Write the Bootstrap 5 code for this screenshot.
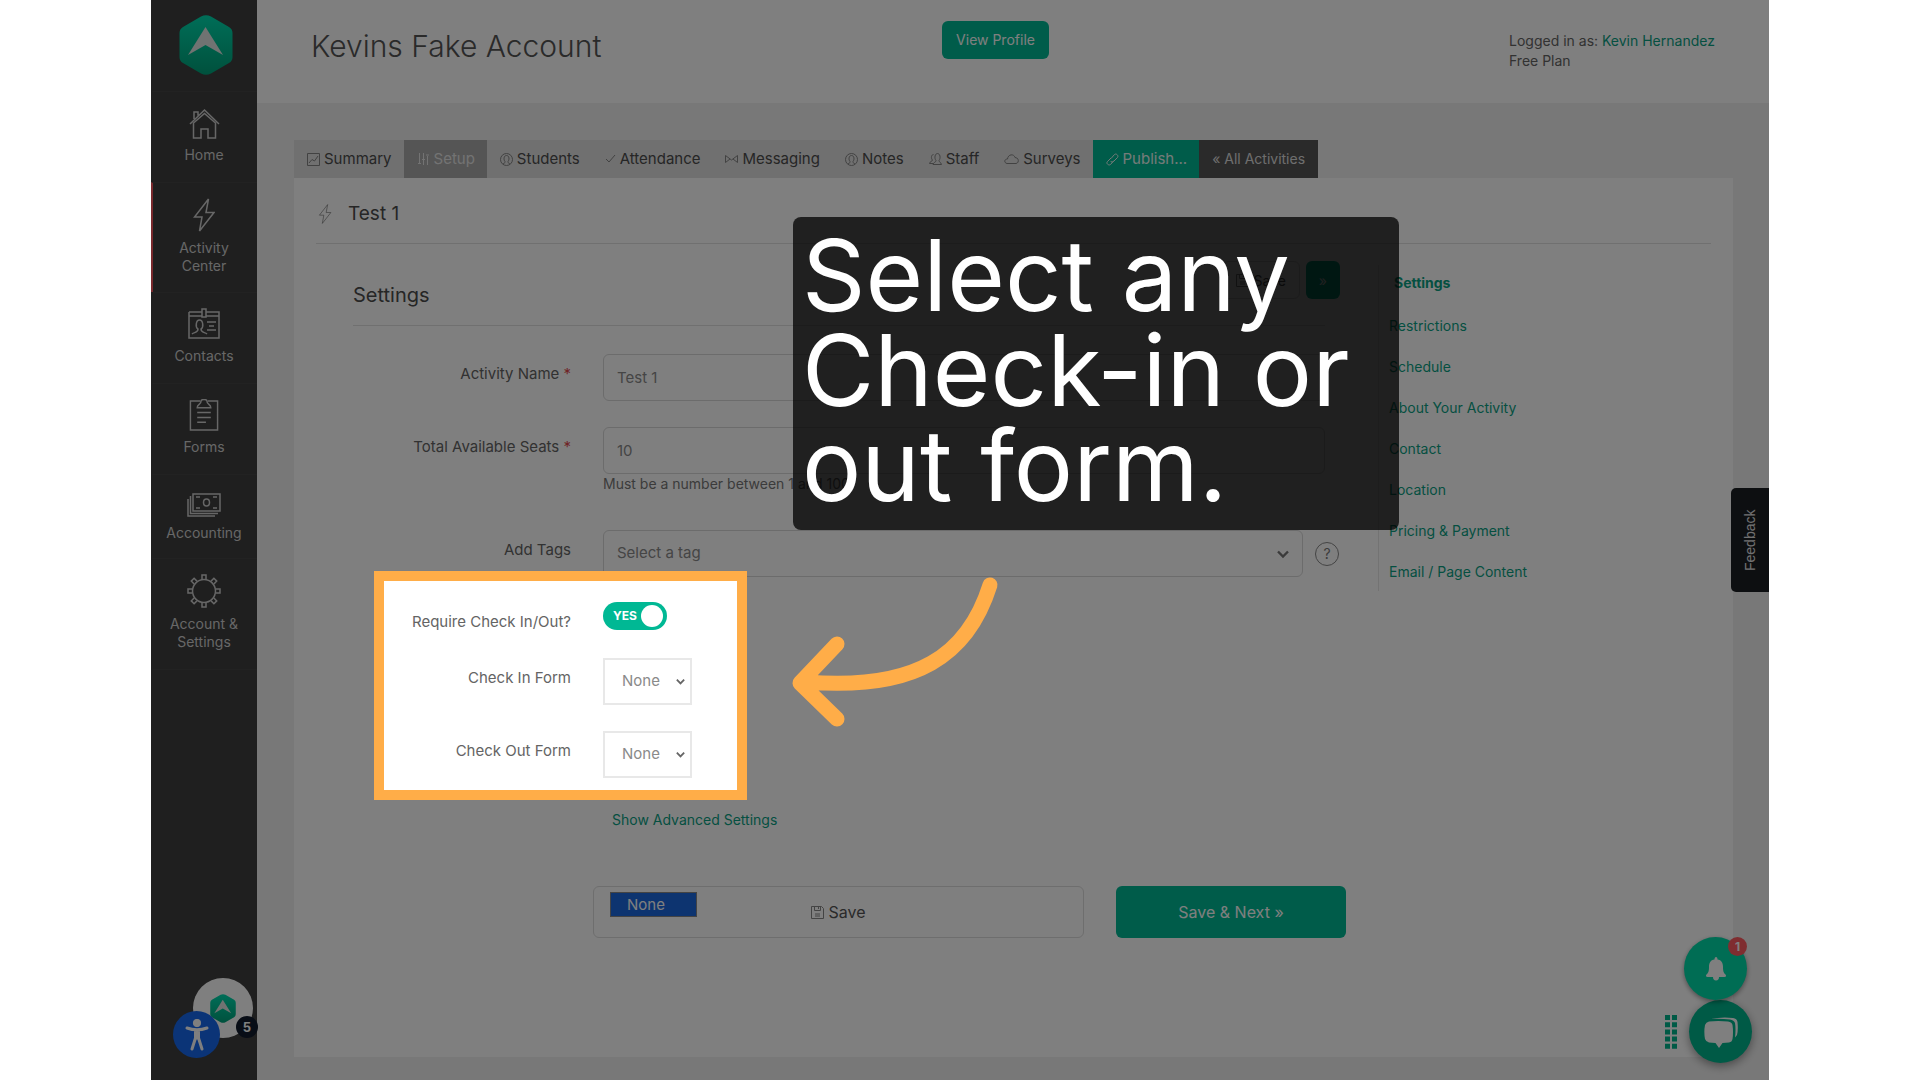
<!DOCTYPE html>
<html lang="en">
<head>
<meta charset="utf-8">
<meta name="viewport" content="width=device-width, initial-scale=1">
<title>Activity Setup</title>
<link href="https://cdn.jsdelivr.net/npm/bootstrap@5.3.0/dist/css/bootstrap.min.css" rel="stylesheet">
<style>
:root{--teal:#00b894;--link:#0aa083;--ink:#646464;--rule:#e0e0e0}
body{font-family:Inter,"Open Sans",sans-serif;font-size:14px;line-height:20px;color:var(--ink);background:#fff}
svg{fill:none;stroke:currentColor;display:block;flex:none}
a{color:var(--link);text-decoration:none}
.stage{padding:0 151px;min-height:100vh}
.shell{position:relative;overflow:hidden;min-height:100vh;background:#f1f1f1}
/* sidebar */
.rail{width:106px;background:#3e3e3e;flex:none;color:#cfcfcf}
.rail-logo{height:91px;padding:15px 0 0 3px}
.rail-link{color:#cfcfcf;border-top:1px solid #454545;border-left:2px solid transparent;padding:15px 2px 18px 0;line-height:18px;gap:7px}
.rail-link.now{border-left-color:#f0525a;padding-bottom:17px}
.rail-link:last-child{border-bottom:1px solid #454545}
.rail-link:hover{color:#fff}
/* header */
.topbar{height:103px;background:#fff;padding:0 47px 0 12px}
.topbar h1{font-size:30px;line-height:36px;font-weight:300;margin:28px 0 0 42px;color:#555}
.who{margin-top:31px;width:213px;font-size:14px}
.who-col{flex:1 1 0}
.btn-teal{background:var(--teal);color:#fff;border:0;border-radius:6px}
.btn-teal:hover{background:#00a585;color:#fff}
.btn-profile{font-size:14px;margin-top:21px;height:38px;padding:0 14px 2px}
/* tabs */
.work{padding:37px 36px 23px 37px}
.tab-strip{background:#e0e0e0;width:fit-content;font-size:15px}
.tab-strip a{color:#4c4c4c;height:38px;padding:0 12px 0 13px;gap:4px}
.tab-strip svg{color:#858585}
.tab-strip .on{background:#aaa;color:#e6e6e6}
.tab-strip .pub{background:var(--teal);color:#e8f6f2}
.tab-strip .all{background:#555;color:#ddd;font-size:14px;padding:0 13px}
.tab-strip .on svg,.tab-strip .pub svg{color:inherit}
/* card */
.sheet{background:#fff;padding:0 22px;flex:1}
.sheet-head{height:66px;border-bottom:1px solid var(--rule);padding:6px 0 0 2px;gap:16px}
.sheet-head h2,.part-head h3{font-size:19px;line-height:24px;font-weight:400;margin:0;color:#4c4c4c}
.form-side{padding:0 53px 0 37px}
.part-head{height:82px;border-bottom:1px solid var(--rule);padding-top:17px;margin-bottom:28px}
.part-head h3{margin-top:22px;font-size:20px}
.part-tools{margin-right:-15px;gap:6px}
.btn-line{background:#fff;border:1px solid #dcdcdc;border-radius:6px;color:#555}
.btn-line svg{color:#888}
.part-tools .btn{height:38px;font-size:14px;padding:0 13px}
.field{display:grid;grid-template-columns:218px 1fr;column-gap:32px;align-items:start;margin-bottom:26px}
.field>label{text-align:right;margin-top:10px;font-size:15px}
.field b{color:#e0484f;font-weight:400}
.field .form-control,.field .form-select{height:47px;border:1px solid #d8d8d8;border-radius:6px;font-size:15px;color:#8a8a8a;padding:0 13px;background-color:#fff}
.field-tags{margin-top:36px}
.form-select.tag-pick{flex:1;background:#fff url("data:image/svg+xml,%3Csvg xmlns='http://www.w3.org/2000/svg' viewBox='0 0 12 12'%3E%3Cpath d='M1 3.5l5 5 5-5' fill='none' stroke='%23777' stroke-width='2.4'/%3E%3C/svg%3E") no-repeat right 13px center/12px}
.field .form-select.mini{width:89px;border:2px solid #e8e8e8;border-radius:0;padding:0 0 0 17px;background:#fff url("data:image/svg+xml,%3Csvg xmlns='http://www.w3.org/2000/svg' viewBox='0 0 12 12'%3E%3Cpath d='M2 4l4 4 4-4' fill='none' stroke='%23666' stroke-width='2'/%3E%3C/svg%3E") no-repeat right 4px center/11px}
.seat-help{grid-column:2;color:#777}
.ask{width:24px;height:24px;border:1px solid #888;border-radius:50%;background:none;color:#777;padding:0;line-height:20px;margin:0 -14px 0 12px}
/* highlighted group: everything around it is dimmed */
.spot{position:relative;width:394px;margin-top:-26px;padding:25px 0 22px}
.spot .field:last-child{margin-bottom:0}
.spot::after{content:"";position:absolute;inset:-6px 0 0 21px;border:10px solid #ffad48;box-shadow:0 0 0 3000px rgba(0,0,0,.5);z-index:10;pointer-events:none}
.yesno{width:64px;height:28px;border-radius:14px;background:var(--teal);color:#fff;font-size:12px;font-weight:700;padding:0 4px 0 10px}
.yesno i{width:22px;height:22px;border-radius:50%;background:#fff}
.more{padding:10px 0 0 259px}
.finish{padding-left:240px;margin:56px -21px 0 0;gap:32px}
.finish .btn{height:52px;font-size:16px;padding:0}
.finish-save{flex:491 1 0;position:relative}
.finish-next{flex:230 1 0}
.pick{position:absolute;left:17px;top:6px;width:87px;height:25px;background:#1a68e0;color:#fff;padding-left:16px;line-height:23px;font-size:15px;border:1px solid #888}
.jump{width:333px;border-left:1px solid #e6e6e6;margin:21px 0 0;padding:0 0 0 10px;height:326px;flex:none}
.jump a{line-height:41px;display:block;width:fit-content}
.jump .here{font-weight:700;padding-left:5px;height:40px;line-height:36px}
/* floating widgets */
.feedback{position:absolute;right:0;top:488px;width:38px;height:104px;background:#1b1e22;color:#e2e2e2;border:0;border-radius:0 5px 5px 0;font-family:"Liberation Sans",Arial,sans-serif;writing-mode:vertical-rl;transform:rotate(180deg);padding:0}
.orb{position:absolute;border:0;border-radius:50%;padding:0;display:flex;align-items:center;justify-content:center;color:#fff}
.orb-brand{left:42px;bottom:42px;width:60px;height:60px;background:#fff}
.orb-access{left:22px;bottom:22px;width:47px;height:47px;background:#1769ee}
.orb-five{left:85px;bottom:42px;width:22px;height:22px;background:#101a2c;font:700 13px/22px Inter,sans-serif}
.orb-bell{right:22px;bottom:80px;width:63px;height:63px;background:#00dba9;box-shadow:0 2px 5px #0006;z-index:2}
.orb-one{right:22px;bottom:124px;width:19px;height:19px;background:#ff5a60;font:700 12px/19px Inter,sans-serif;z-index:3}
.orb-chat{right:17px;bottom:17px;width:63px;height:63px;background:#00b48c;box-shadow:0 3px 10px #0006}
.grip{position:absolute;right:92px;bottom:31px}
/* annotation */
.callout{position:absolute;left:642px;top:217px;width:606px;height:313px;border-radius:8px;background:rgba(0,0,0,.75);color:#fff;font-size:99px;line-height:95px;padding:11px 9px;margin:0;z-index:20;white-space:nowrap}
.swoop{position:absolute;left:629px;top:560px;z-index:20;color:#ffad48}
</style>
</head>
<body>
<svg width="0" height="0" class="position-absolute" aria-hidden="true"><defs>
<linearGradient id="hexfill" x1="0" y1="0" x2="0" y2="1"><stop offset="0" stop-color="#00dcb0"/><stop offset="1" stop-color="#00a27a"/></linearGradient>
<symbol id="hex" viewBox="0 0 54 60"><path d="M22 1.500Q27-1 32 1.500L50 12Q53.500 14 53.500 18V42Q53.500 46 50 48L32 58.500Q27 61 22 58.500L4 48Q.5 46 .5 42V18Q.5 14 4 12Z" fill="url(#hexfill)" stroke="none"/><path d="M26.500 12L44 40 26.500 30 9 40Z" fill="#e0e6e4" stroke="none"/></symbol>
<symbol id="bolt" viewBox="0 0 22 34"><path d="M15.500 1L1.500 19H9L6.500 33 21 14.500H13Z"/></symbol>
<symbol id="disk" viewBox="0 0 13 13"><path d="M.5.5H10.500L12.500 2.500V12.500H.5ZM3.500.5V4.500H9.500V.5M7.500 1V3M4 8H9M4 10H9"/></symbol>
<symbol id="face" viewBox="0 0 13 13"><circle cx="6.500" cy="6.500" r="6"/><path d="M3 11C5 10 5 9.500 5 8.500 3.500 7 3.500 2.500 6.500 2.500S9.500 7 8 8.500C8 9.500 8 10 10 11"/></symbol>
</defs></svg>

<div class="stage"><div class="shell d-flex">
  <nav class="rail d-flex flex-column" aria-label="Main">
    <a class="rail-logo d-flex justify-content-center" href="#" aria-label="Dashboard"><svg width="54" height="60"><use href="#hex"/></svg></a>
    <a class="rail-link d-flex flex-column align-items-center text-center" href="#"><svg width="31" height="32" viewBox="0 0 31 32" stroke-width="1.500"><path d="M1 17L15.500 3 30 17M4.500 16V31H12V22H19V31H26.500V16L15.500 6.500ZM5 12V5H9V8.500"/></svg>Home</a>
    <a class="rail-link now d-flex flex-column align-items-center text-center" href="#"><svg width="22" height="34" stroke-width="1.500"><use href="#bolt"/></svg>Activity<br>Center</a>
    <a class="rail-link d-flex flex-column align-items-center text-center" href="#"><svg width="32" height="32" viewBox="0 0 32 32" stroke-width="1.500"><path d="M1 4H14M18 4H31V30H1V4M1 8H14M18 8H31M14 1H18V9H14ZM19 14H28M21 18H26M19 22H28M4 26C6 24 10 25 10 21 7 19 8 12 11.500 12S16 19 13 21C13 25 17 24 19 26"/></svg>Contacts</a>
    <a class="rail-link d-flex flex-column align-items-center text-center" href="#"><svg width="30" height="32" viewBox="0 1 30 33" stroke-width="1.500"><path d="M11 3H1V33H29V3H19M8 10C8 6 12 7 12 3 12 1 18 1 18 3 18 7 22 6 22 10ZM8 15H22M8 20H22M8 25H17"/></svg>Forms</a>
    <a class="rail-link d-flex flex-column align-items-center text-center pb-3 pt-3" href="#"><svg width="34" height="26" viewBox="0 0 34 26" stroke-width="1.500"><path d="M6 3H33V20H6ZM3.500 5V22.500H31M1 8V25H28M9 6H13M26 6H30M9 17H13M26 17H30"/><ellipse cx="19.500" cy="11.500" rx="3" ry="3.500"/></svg>Accounting</a>
    <a class="rail-link d-flex flex-column align-items-center text-center" href="#"><svg width="34" height="34" viewBox="-17 -17 34 34" stroke-width="1.500"><circle r="11.500"/><g id="cogs"><path id="tooth" d="M-2-12V-16H2V-12"/><use href="#tooth" transform="rotate(90)"/><use href="#tooth" transform="rotate(180)"/><use href="#tooth" transform="rotate(270)"/></g><use href="#cogs" transform="rotate(45)"/></svg>Account &amp;<br>Settings</a>
  </nav>

  <div class="flex-grow-1 d-flex flex-column">
    <header class="topbar d-flex align-items-start">
      <div class="who-col"><h1>Kevins Fake Account</h1></div>
      <button class="btn btn-teal btn-profile" type="button">View Profile</button>
      <div class="who-col d-flex justify-content-end"><div class="who text-nowrap">Logged in as: <a href="#">Kevin Hernandez</a><br>Free Plan</div></div>
    </header>

    <main class="work flex-grow-1 d-flex flex-column">
      <nav class="tab-strip d-flex text-nowrap" aria-label="Activity">
        <a class="d-flex align-items-center" href="#"><svg width="13" height="13" viewBox="0 0 13 13"><path d="M.5.5H12.500V12.500H.5ZM2 10L5 6.500 7.500 8 11 3"/></svg>Summary</a>
        <a class="d-flex align-items-center on" href="#"><svg width="13" height="13" viewBox="0 0 13 13"><path d="M2.500 0V10M6.500 0V12M10.500 3V12M1 10.500H4M5 6.500H8M9 2H12"/></svg>Setup</a>
        <a class="d-flex align-items-center" href="#"><svg width="13" height="13"><use href="#face"/></svg>Students</a>
        <a class="d-flex align-items-center" href="#"><svg width="11" height="12" viewBox="0 0 11 12"><path d="M1 6L4 9 10 2"/></svg>Attendance</a>
        <a class="d-flex align-items-center" href="#"><svg width="13" height="12" viewBox="0 0 13 12"><path d="M.5 2.500V9.500L5 6M.5 2.500L6.500 7 12.500 2.500V9.500L8 6"/></svg>Messaging</a>
        <a class="d-flex align-items-center" href="#"><svg width="13" height="13"><use href="#face"/></svg>Notes</a>
        <a class="d-flex align-items-center" href="#"><svg width="13" height="13" viewBox="0 0 13 13"><path d="M.5 10.500C1 8 3.500 8.500 3.500 7 1.500 5 2.500 1.500 4.500 1.500M4 11.500C4.500 9 7 9.500 7 7.500 5 5 6 .5 8.500.5S12 5 10 7.500C10 9.500 12 9 12.500 11.500ZM.5 10.500H4"/></svg>Staff</a>
        <a class="d-flex align-items-center" href="#"><svg width="15" height="12" viewBox="0 0 15 12"><path d="M3 10.500C0 10 0 6 3.500 6 4 1 10 .5 11 4.500 15 4.500 15.500 10 12 10.500Z"/></svg>Surveys</a>
        <a class="d-flex align-items-center pub" href="#"><svg width="13" height="13" viewBox="0 0 13 13"><path d="M5 5.500L8.500 1.500C10 0 13 2.500 11.500 4.500L7.500 8.500C6.500 9.500 5 9 4.500 8M8 7.500L4.500 11.500C3 13-.5 10.500 1.500 8.500L5 5"/></svg>Publish...</a>
        <a class="d-flex align-items-center all" href="#">« All Activities</a>
      </nav>

      <section class="sheet">
        <div class="sheet-head d-flex align-items-center"><svg width="14" height="20"><use href="#bolt"/></svg><h2>Test 1</h2></div>
        <div class="d-flex">
          <form class="form-side flex-grow-1">
            <div class="part-head d-flex align-items-start justify-content-between">
              <h3>Settings</h3>
              <div class="part-tools d-flex"><button class="btn btn-line d-flex align-items-center gap-1" type="button"><svg width="13" height="13"><use href="#disk"/></svg>Save</button><button class="btn btn-teal" type="button">»</button></div>
            </div>
            <div class="field"><label for="actName">Activity Name <b>*</b></label><input class="form-control" id="actName" value="Test 1"></div>
            <div class="field mb-0"><label for="seats">Total Available Seats <b>*</b></label><input class="form-control" id="seats" value="10"><div class="seat-help">Must be a number between 1 and 100</div></div>
            <div class="field field-tags"><label for="tags">Add Tags</label><div class="d-flex align-items-center"><select class="form-select tag-pick" id="tags"><option>Select a tag</option></select><button class="ask" type="button" aria-label="Help">?</button></div></div>
            <div class="spot">
              <div class="field"><label for="needCheck">Require Check In/Out?</label><div><input class="visually-hidden" type="checkbox" id="needCheck" checked><label for="needCheck" class="yesno d-flex align-items-center justify-content-between">YES<i></i></label></div></div>
              <div class="field"><label for="inForm">Check In Form</label><select class="form-select mini" id="inForm"><option>None</option></select></div>
              <div class="field"><label for="outForm">Check Out Form</label><select class="form-select mini" id="outForm"><option>None</option></select></div>
            </div>
            <div class="more"><a href="#">Show Advanced Settings</a></div>
            <div class="finish d-flex">
              <div class="finish-save"><button class="btn btn-line w-100 d-flex align-items-center justify-content-center gap-1" type="button"><svg width="13" height="13"><use href="#disk"/></svg>Save</button><div class="pick">None</div></div>
              <button class="btn btn-teal finish-next" type="button">Save &amp; Next »</button>
            </div>
          </form>
          <nav class="jump" aria-label="Sections">
            <a class="here" href="#">Settings</a><a href="#">Restrictions</a><a href="#">Schedule</a><a href="#">About Your Activity</a><a href="#">Contact</a><a href="#">Location</a><a href="#">Pricing &amp; Payment</a><a href="#">Email / Page Content</a>
          </nav>
        </div>
      </section>
    </main>
  </div>

  <button class="feedback" type="button">Feedback</button>
  <button class="orb orb-brand" type="button" aria-label="Checklist"><svg width="26" height="29"><use href="#hex"/></svg></button>
  <button class="orb orb-access" type="button" aria-label="Accessibility"><svg width="24" height="32" viewBox="0 0 24 32" stroke="none" fill="#fff"><circle cx="12" cy="4" r="3.700" fill="#fff"/><path fill="none" stroke="#fff" stroke-width="3" stroke-linecap="round" stroke-linejoin="round" d="M2 9Q12 12.500 22 9M10.500 12V19L7 30M13.500 12V19L17 30M12 12V19"/></svg></button>
  <span class="orb orb-five">5</span>
  <svg class="grip" width="12" height="34" viewBox="0 0 12 34" aria-hidden="true"><path stroke="#00b48c" stroke-width="5" stroke-dasharray="5 2.200" d="M2.500 0V34M9.500 0V34"/></svg>
  <button class="orb orb-bell" type="button" aria-label="Notifications"><svg width="20" height="24" viewBox="0 0 20 24"><path fill="#fff" stroke="none" d="M10 0C11 0 11.500 1 11.500 2.500 15.500 3 17 6 17 10 17 15 18 16 19.500 17.500 20.500 19 20 20 18.500 20H13C13 22 12 23.500 10 23.500S7 22 7 20H1.500C0 20-.5 19 .5 17.500 2 16 3 15 3 10 3 6 4.500 3 8.500 2.500 8.500 1 9 0 10 0Z"/></svg></button>
  <span class="orb orb-one">1</span>
  <button class="orb orb-chat" type="button" aria-label="Chat"><svg width="34" height="32" viewBox="0 0 34 32"><path fill="#fff" stroke="none" d="M1 9Q2 6 5 5.500 14 4.500 24 5.500 28 6 28.500 9 29.500 16 28.500 23 28 26 25 26.500L18.500 27 15 32 11.500 27 5 26.500Q2 26 1 23-.3 16 1 9ZM7 3Q18 .5 29 2 33 2.500 33.500 6 34.300 14 33 19L31 21.500Q32 13 31 7 30 4 26 3.500 17 2.500 7 3Z"/></svg></button>

  <p class="callout">Select any<br>Check-in or<br>out form.</p>
  <svg class="swoop" width="230" height="180" viewBox="780 560 230 180" aria-hidden="true"><path stroke-width="15" stroke-linecap="round" stroke-linejoin="round" d="M990 585C968 655 917 691 806 682M837 644L800 683 837 719"/></svg>
</div></div>
<script src="https://cdn.jsdelivr.net/npm/bootstrap@5.3.0/dist/js/bootstrap.bundle.min.js"></script>
</body>
</html>
